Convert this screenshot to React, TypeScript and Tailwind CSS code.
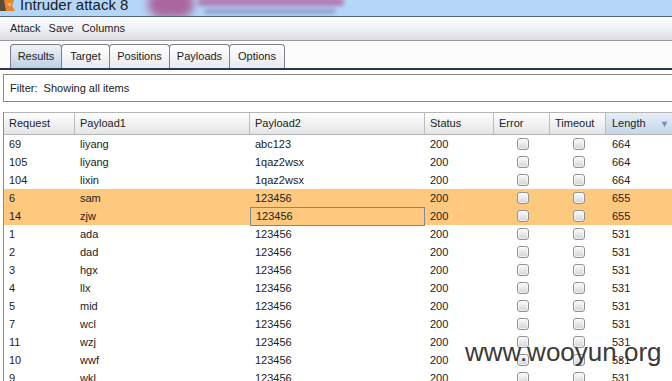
import React from "react";

const rows: { req: string; p1: string; p2: string; len: string; hl?: boolean; sel?: boolean }[] = [
  { req: "69", p1: "liyang", p2: "abc123", len: "664" },
  { req: "105", p1: "liyang", p2: "1qaz2wsx", len: "664" },
  { req: "104", p1: "lixin", p2: "1qaz2wsx", len: "664" },
  { req: "6", p1: "sam", p2: "123456", len: "655", hl: true },
  { req: "14", p1: "zjw", p2: "123456", len: "655", hl: true, sel: true },
  { req: "1", p1: "ada", p2: "123456", len: "531" },
  { req: "2", p1: "dad", p2: "123456", len: "531" },
  { req: "3", p1: "hgx", p2: "123456", len: "531" },
  { req: "4", p1: "llx", p2: "123456", len: "531" },
  { req: "5", p1: "mid", p2: "123456", len: "531" },
  { req: "7", p1: "wcl", p2: "123456", len: "531" },
  { req: "11", p1: "wzj", p2: "123456", len: "531" },
  { req: "10", p1: "wwf", p2: "123456", len: "531" },
  { req: "9", p1: "wkl", p2: "123456", len: "531" },
];

const cols = "grid grid-cols-[71px_175px_175px_69px_56px_56px_1fr]";

function Check() {
  return (
    <div className="w-[12px] h-[12px] rounded-[3px] border border-[#8f9193] bg-gradient-to-b from-[#fbfbfb] to-[#d3d5d9] shadow-[inset_0_0_0_1px_rgba(255,255,255,0.6)]" />
  );
}

export default function App() {
  const tabs = ["Results", "Target", "Positions", "Payloads", "Options"];
  const tabW = ["w-[52px]", "w-[49px]", "w-[61px]", "w-[61px]", "w-[56px]"];
  return (
    <div
      className="relative w-[672px] h-[381px] overflow-hidden bg-white text-[#222] text-[11px]"
      style={{ fontFamily: '"Liberation Sans", Arial, sans-serif' }}
    >
      {/* title bar */}
      <div className="h-[17px] bg-[#b4d6f9] border-b border-[#52657c] flex items-center overflow-hidden">
        <svg width="16" height="16" viewBox="0 0 16 16" className="shrink-0 -mt-[5px]">
          <rect x="0" y="0" width="9" height="13" fill="#5a4a3a" />
          <path d="M4 2 L14 2 L12 8 L15 13 L6 13 Z" fill="#e8842a" />
          <path d="M7 5 L11 5 L10 9 Z" fill="#f6c27a" />
        </svg>
        <span className="ml-[4px] text-[15px] leading-none -mt-[8px] text-[#1a1a1a]">Intruder attack 8</span>
        <div className="ml-[20px] w-[46px] h-[28px] rounded-full bg-[#a8417f] opacity-75 blur-[4px] -mt-[8px]" />
        <div className="ml-[4px] flex flex-col gap-[3px] blur-[2px] opacity-55 -mt-[4px]">
          <div className="w-[146px] h-[8px] bg-[#b0307a] rounded-sm" />
          <div className="w-[132px] h-[5px] bg-[#6f77a6] rounded-sm ml-[6px]" />
        </div>
      </div>

      {/* menu bar */}
      <div className="h-[24px] bg-gradient-to-b from-[#fbfcfe] via-[#f1f2f5] to-[#dcdde2] border-b border-[#9a9a9a] flex items-center pl-[10px] gap-[8px] text-[11px] text-[#222]">
        <span>Attack</span>
        <span>Save</span>
        <span>Columns</span>
      </div>

      {/* tabs */}
      <div className="h-[27px] bg-[#fcfcfd] flex items-end pl-[10px]">
        {tabs.map((t, i) => (
          <div
            key={t}
            className={`${tabW[i]} h-[24px] flex items-center justify-center rounded-t-[4px] border border-b-0 border-[#7d7f83] -ml-px first:ml-0 text-[11px] ${
              i === 0
                ? "bg-gradient-to-b from-[#eef3f9] to-[#bfd0e2]"
                : "bg-gradient-to-b from-[#ffffff] to-[#e9eaee]"
            }`}
          >
            {t}
          </div>
        ))}
      </div>
      <div className="h-[2px] bg-[#253a55]" />

      {/* filter */}
      <div className="pl-[3px] pt-[4px]">
        <div className="h-[28px] border border-r-0 border-[#8a8a8a] bg-white flex items-center pl-[6px] text-[11px]">
          Filter:&nbsp; Showing all items
        </div>
      </div>

      {/* table */}
      <div className="ml-[3px] mt-[10px] border-l border-[#8c8c8c]">
        <div className={`${cols} h-[23px] border-t border-b border-[#b5b5b5] bg-gradient-to-b from-[#fefefe] to-[#e4e5e7]`}>
          {["Request", "Payload1", "Payload2", "Status", "Error", "Timeout"].map((h) => (
            <div key={h} className="border-r border-[#bdbdbd] flex items-center pl-[5px]">
              {h}
            </div>
          ))}
          <div className="flex items-center pl-[6px] bg-gradient-to-b from-[#e6eef7] to-[#c4d6e9] relative">
            Length
            <span className="absolute right-[3px] top-[5px] text-[9px] text-[#6f8fb5]">▼</span>
          </div>
        </div>
        {rows.map((r) => (
          <div key={r.req} className={`${cols} h-[18px] ${r.hl ? "bg-[#fec97e]" : "bg-white"}`}>
            <div className="flex items-center pl-[5px]">{r.req}</div>
            <div className="flex items-center pl-[5px]">{r.p1}</div>
            <div className={`flex items-center pl-[5px] ${r.sel ? "border border-[#7b8a99] pl-[4px]" : ""}`}>{r.p2}</div>
            <div className="flex items-center pl-[5px]">200</div>
            <div className="flex items-center justify-center pl-[1px]"><Check /></div>
            <div className="flex items-center justify-center pl-[1px]"><Check /></div>
            <div className="flex items-center pl-[6px]">{r.len}</div>
          </div>
        ))}
      </div>

      {/* watermark */}
      <div className="absolute left-[465px] top-[339px] text-[26px] leading-none text-[#3a3a3a]">
        www.wooyun.org
      </div>
    </div>
  );
}
